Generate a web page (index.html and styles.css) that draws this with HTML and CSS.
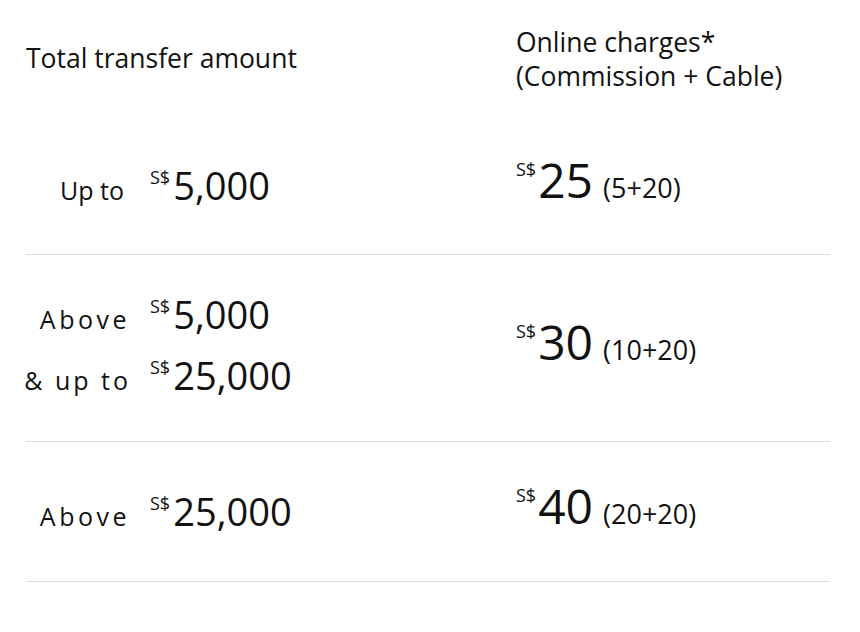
FILE: index.html
```html
<!DOCTYPE html>
<html>
<head>
<meta charset="utf-8">
<link rel="stylesheet" href="styles.css">
</head>
<body>
<div class="table">
  <div class="row head">
    <div class="left"><div class="title">Total transfer amount</div></div>
    <div class="right"><div class="title">Online charges*<br>(Commission + Cable)</div></div>
  </div>
  <div class="row r1">
    <div class="left">
      <div class="amounts">
        <span class="label upto">Up to</span><span class="amt"><sup>S$</sup>5,000</span>
      </div>
    </div>
    <div class="right"><span class="fee"><sup>S$</sup><span class="big">25</span><span class="split">(5+20)</span></span></div>
  </div>
  <div class="row r2">
    <div class="left">
      <div class="amounts two">
        <span class="label spaced">Above</span><span class="amt"><sup>S$</sup>5,000</span>
        <span class="label spaced tight">&amp; up to</span><span class="amt"><sup>S$</sup>25,000</span>
      </div>
    </div>
    <div class="right"><span class="fee"><sup>S$</sup><span class="big">30</span><span class="split">(10+20)</span></span></div>
  </div>
  <div class="row r3">
    <div class="left">
      <div class="amounts">
        <span class="label spaced">Above</span><span class="amt"><sup>S$</sup>25,000</span>
      </div>
    </div>
    <div class="right"><span class="fee"><sup>S$</sup><span class="big">40</span><span class="split">(20+20)</span></span></div>
  </div>
</div>
</body>
</html>
```
FILE: styles.css
```css
html, body {
  margin: 0;
  padding: 0;
  background: #fff;
}
body {
  font-family: "Open Sans", "Noto Sans", sans-serif;
  color: #111;
}
.table {
  margin: 0 30px 0 26px;
}
.row {
  display: grid;
  grid-template-columns: 490px 1fr;
  align-items: center;
}
.head { height: 118px; }
.r1 { height: 136px; border-bottom: 1px solid #dcdcdc; }
.r2 { height: 186px; border-bottom: 1px solid #dcdcdc; }
.r3 { height: 139px; border-bottom: 1px solid #dcdcdc; }
.head .left { padding-bottom: 2px; }
.title {
  font-size: 26.5px;
  line-height: 34px;
}
.amounts {
  display: grid;
  grid-template-columns: 104px auto;
  column-gap: 20px;
  row-gap: 7px;
  align-items: baseline;
}
.r1 .left, .r3 .left { padding-top: 6px; }
.label {
  justify-self: end;
  font-size: 25px;
  line-height: 46px;
  white-space: nowrap;
}
.upto { margin-right: 6px; }
.spaced { letter-spacing: 3.5px; }
.tight { letter-spacing: 3px; margin-right: -1px; }
.amt {
  font-size: 38px;
  line-height: 46px;
  white-space: nowrap;
}
sup {
  font-size: 18px;
  vertical-align: 0;
  position: relative;
  top: -16px;
  margin-right: 3px;
}
.r1 .right, .r2 .right, .r3 .right { padding-bottom: 12px; }
.fee { white-space: nowrap; }
.fee sup { top: -22px; margin-right: 2px; }
.big {
  font-size: 48px;
  line-height: 56px;
}
.split {
  font-size: 27px;
  margin-left: 10px;
}
```
